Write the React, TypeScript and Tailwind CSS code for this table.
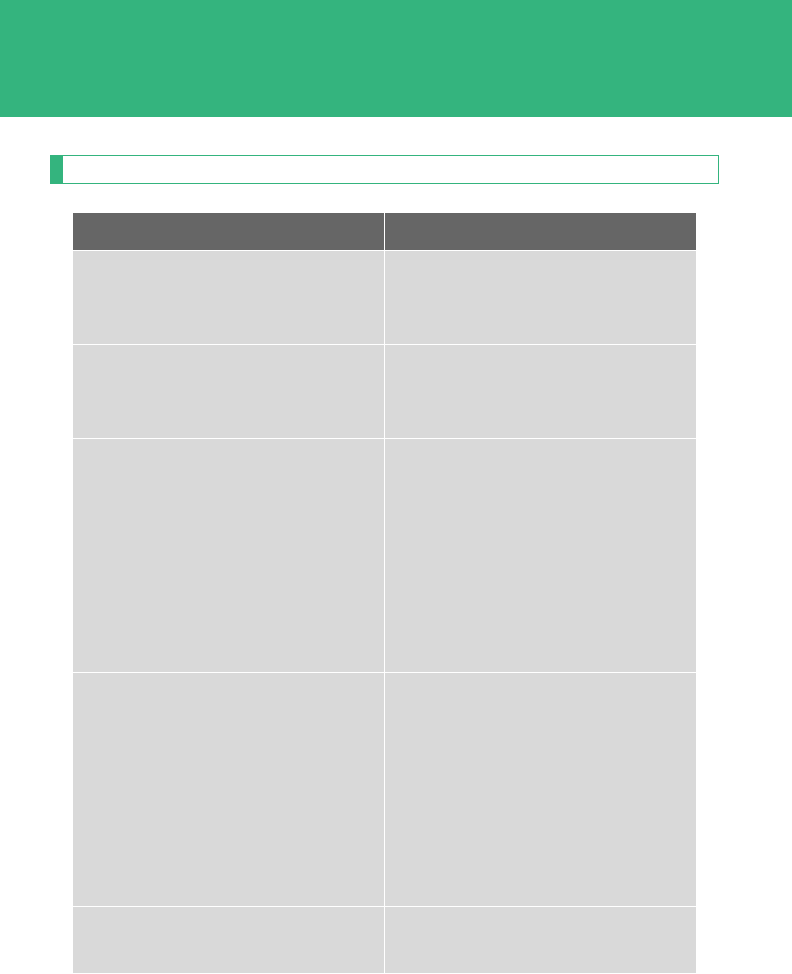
export default function App() {
  const rows = [93, 93, 233, 233, 66];

  return (
    <div className="min-h-[974px] bg-white font-['Liberation_Sans',sans-serif]">
      <header className="h-[117px] bg-[#34b47e]" />
      <div className="mt-[38px] ml-[50px] flex h-[29px] w-[669px] border border-[#34b47e]">
        <div className="w-[12px] bg-[#34b47e]" />
        <div className="flex-1" />
      </div>
      <div className="mt-[29px] ml-[73px] grid w-[623px] grid-cols-2 gap-px">
        <div className="h-[37px] bg-[#666666]" />
        <div className="h-[37px] bg-[#666666]" />
        {rows.map((h, i) => (
          <div key={i} className="contents">
            <div className="bg-[#d9d9d9]" style={{ height: h }} />
            <div className="bg-[#d9d9d9]" style={{ height: h }} />
          </div>
        ))}
      </div>
    </div>
  );
}
